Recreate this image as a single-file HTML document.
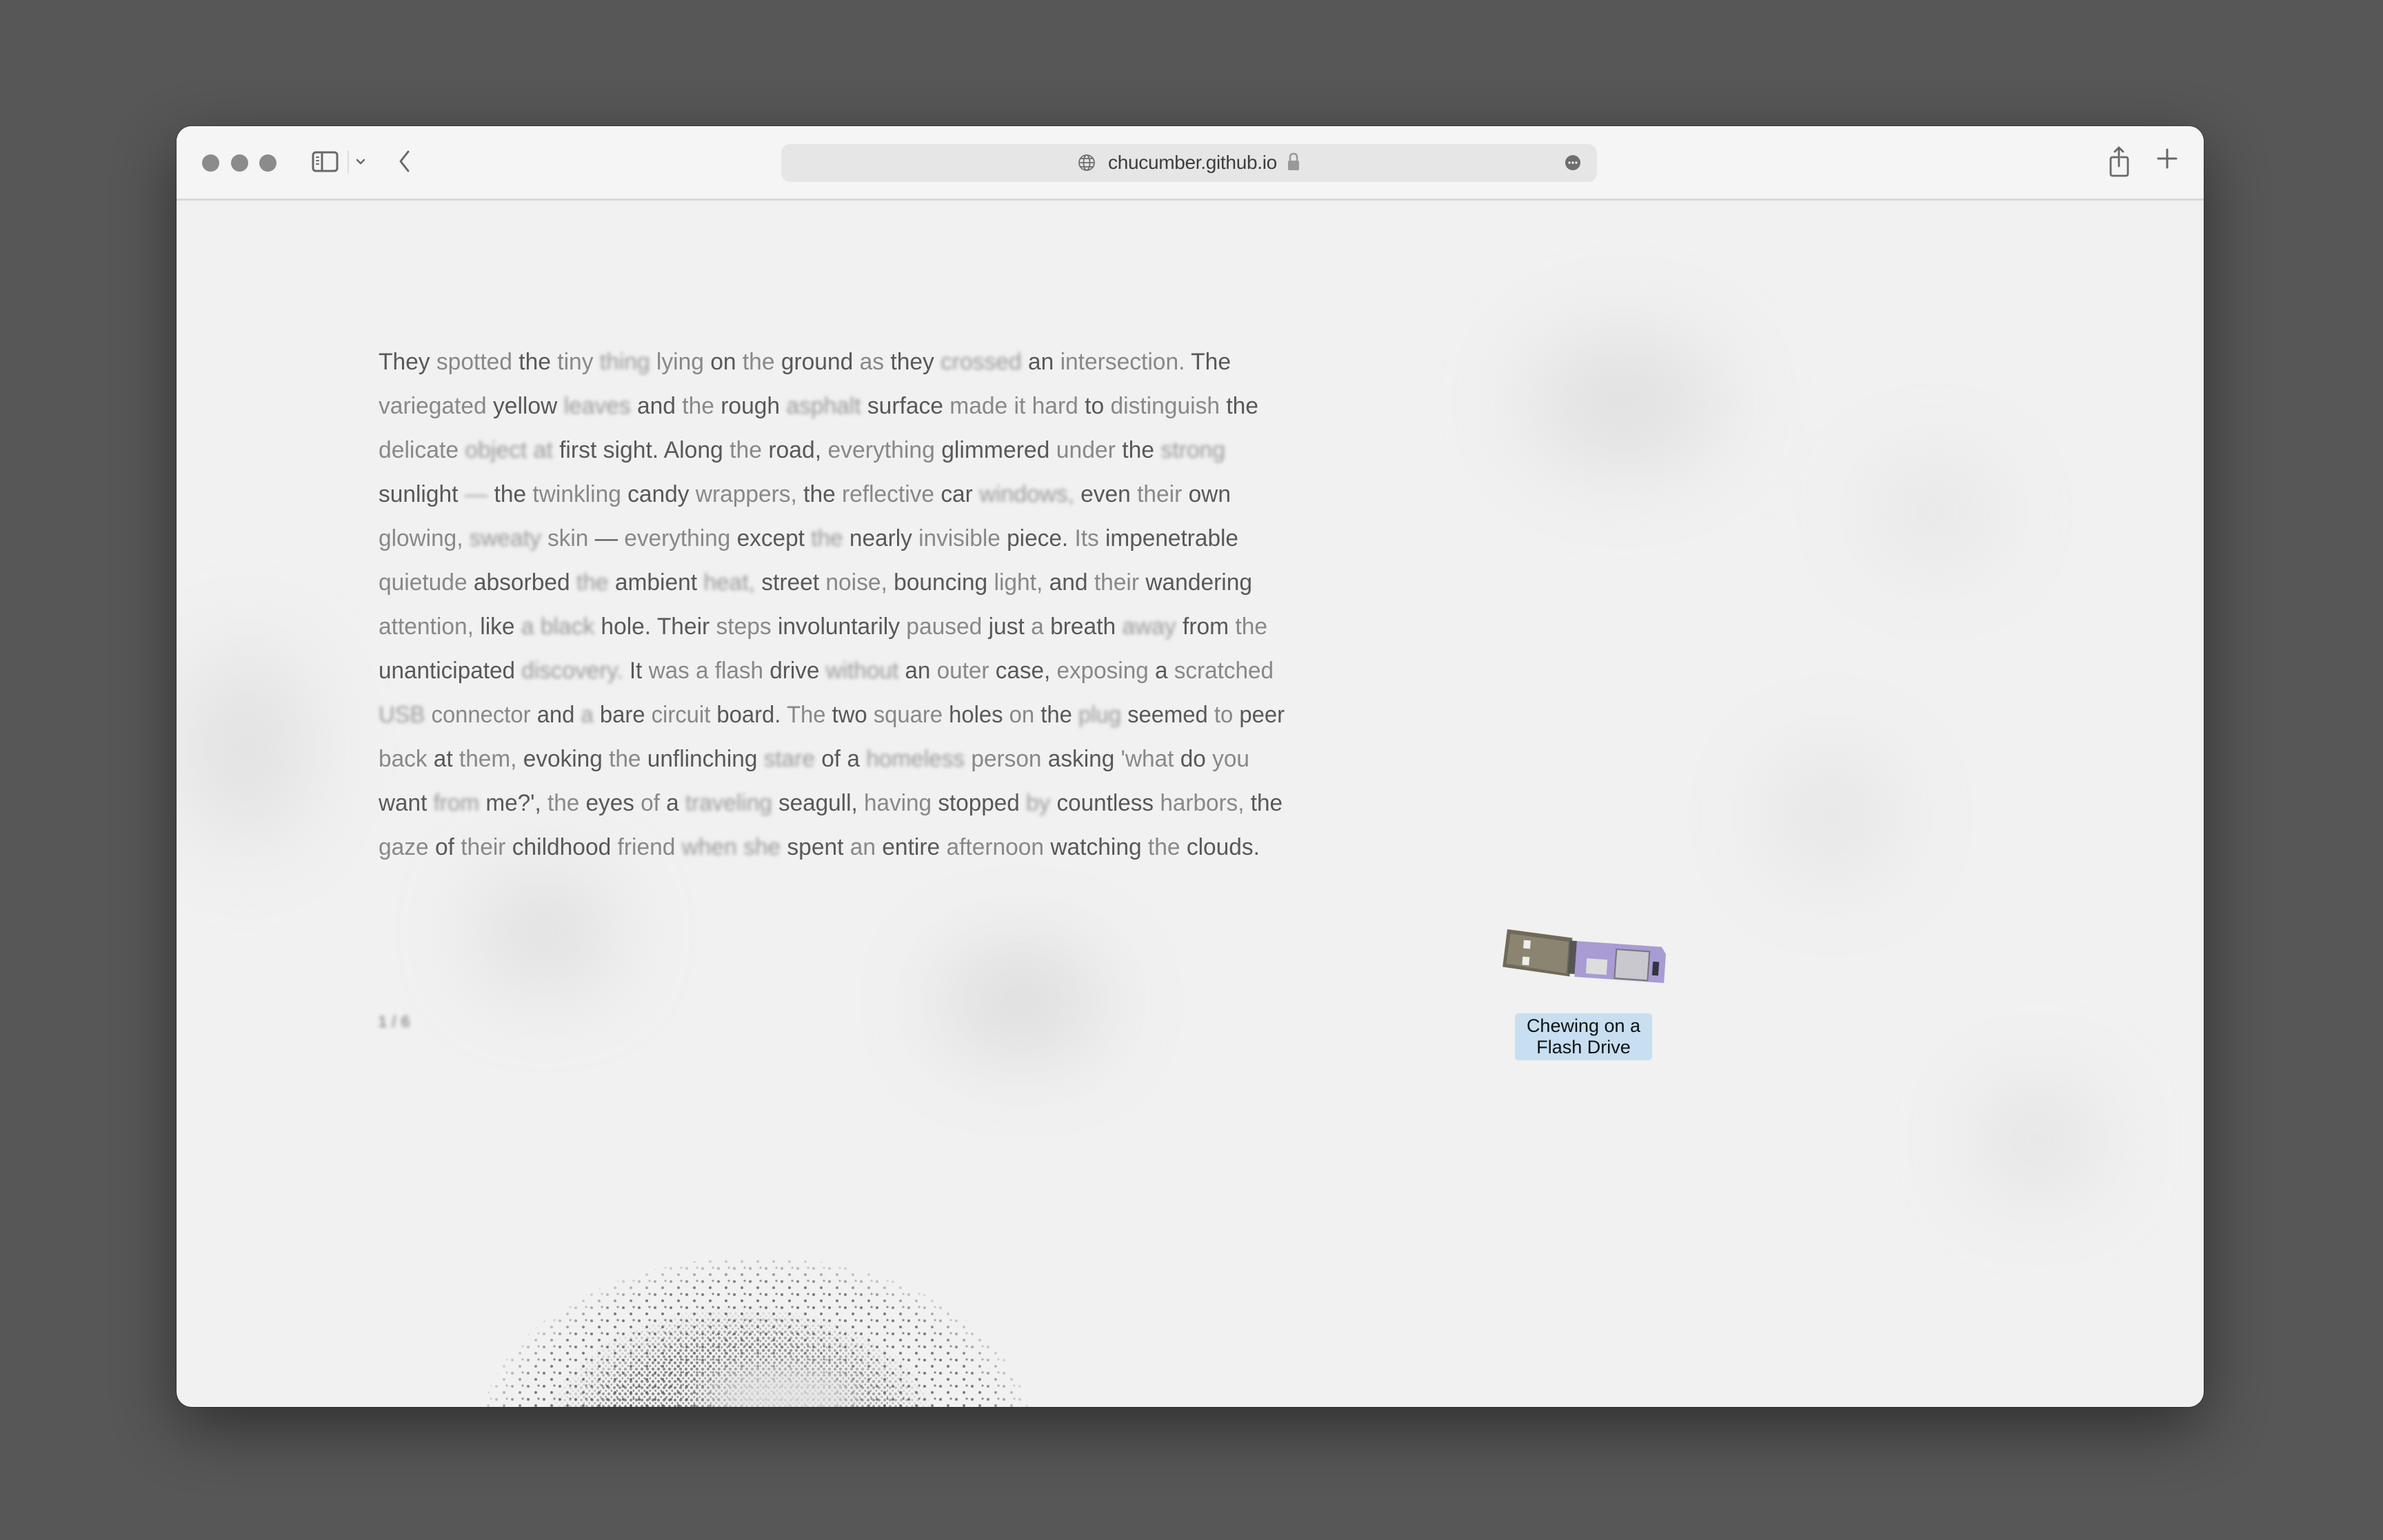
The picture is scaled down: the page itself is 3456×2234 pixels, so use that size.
<!DOCTYPE html>
<html><head><meta charset="utf-8">
<style>
html,body{margin:0;padding:0;width:3456px;height:2234px;background:#575757;overflow:hidden;}
#win{position:absolute;left:256px;top:183px;width:2940px;height:1858px;border-radius:22px;overflow:hidden;background:#f1f1f1;box-shadow:0 30px 90px rgba(0,0,0,.45),0 0 0 1px rgba(0,0,0,.3);}
#tb{position:absolute;left:0;top:0;width:2940px;height:105px;background:#f5f5f5;border-bottom:3px solid #d9d9d9;}
.tl{position:absolute;top:41px;width:25px;height:25px;border-radius:50%;background:#8b8b8b;}
#addr{position:absolute;left:877px;top:26px;width:1183px;height:55px;border-radius:13px;background:#e6e6e6;}
#url{position:absolute;left:474px;top:11px;font:28px "Liberation Sans",sans-serif;color:#3d3d3d;letter-spacing:-0.3px;}
svg text{font-family:"Liberation Sans Narrow","Liberation Sans",sans-serif;font-size:34px;}
.d{fill:#585858}.l{fill:#888}.b{fill:#999;filter:url(#bl)}
#lab{position:absolute;left:1941px;top:1287px;width:199px;height:68px;background:#c7dff1;border-radius:5px;font:27px/31px "Liberation Sans",sans-serif;color:#111;text-align:center;padding-top:3px;box-sizing:border-box;}
</style></head><body>
<div id="win">
<svg width="2940" height="1858" style="position:absolute;left:0;top:0">
<defs>
<filter id="bl"><feGaussianBlur stdDeviation="2.6"/></filter>
<filter id="bb" x="-50%" y="-50%" width="200%" height="200%"><feGaussianBlur stdDeviation="70"/></filter>
<filter id="wb" x="-50%" y="-50%" width="200%" height="200%"><feGaussianBlur stdDeviation="25"/></filter>
<pattern id="dots" width="8" height="9" patternUnits="userSpaceOnUse"><circle cx="3" cy="3" r="2.1" fill="#555"/><circle cx="7" cy="7.5" r="1.6" fill="#666"/></pattern>
<pattern id="sdots" width="23" height="19" patternUnits="userSpaceOnUse"><circle cx="4" cy="4" r="2" fill="#555"/><circle cx="15" cy="13" r="2" fill="#555"/><circle cx="19" cy="3" r="1.6" fill="#666"/></pattern>
<radialGradient id="gm" cx="0.5" cy="0.5" r="0.5"><stop offset="0" stop-color="#fff"/><stop offset="0.7" stop-color="#fff" stop-opacity="0.8"/><stop offset="1" stop-color="#fff" stop-opacity="0"/></radialGradient>
<radialGradient id="gs" cx="0.5" cy="0.5" r="0.5"><stop offset="0" stop-color="#fff"/><stop offset="0.85" stop-color="#fff" stop-opacity="0.9"/><stop offset="1" stop-color="#fff" stop-opacity="0.2"/></radialGradient>
<mask id="smask"><ellipse cx="840" cy="1900" rx="400" ry="260" fill="url(#gs)"/></mask>
<mask id="gmask"><ellipse cx="820" cy="1900" rx="290" ry="190" fill="url(#gm)"/></mask>
</defs>
<g filter="url(#bb)" opacity="0.35">
<ellipse cx="535" cy="1170" rx="90" ry="70" fill="#aaa"/>
<ellipse cx="1225" cy="1270" rx="110" ry="60" fill="#999"/>
<ellipse cx="100" cy="900" rx="80" ry="140" fill="#bbb"/>
<ellipse cx="2100" cy="400" rx="140" ry="90" fill="#bbb"/>
<ellipse cx="2700" cy="1470" rx="80" ry="70" fill="#bbb"/>
<ellipse cx="2400" cy="1000" rx="90" ry="90" fill="#ccc"/>
<ellipse cx="2550" cy="560" rx="90" ry="70" fill="#ccc"/>
</g>
<g transform="translate(-256,-183)">
<text x="549" y="536" textLength="1236" lengthAdjust="spacingAndGlyphs"><tspan class="d">They </tspan><tspan class="l">spotted </tspan><tspan class="d">the </tspan><tspan class="l">tiny </tspan><tspan class="b">thing </tspan><tspan class="l">lying </tspan><tspan class="d">on </tspan><tspan class="l">the </tspan><tspan class="d">ground </tspan><tspan class="l">as </tspan><tspan class="d">they </tspan><tspan class="b">crossed </tspan><tspan class="d">an </tspan><tspan class="l">intersection. </tspan><tspan class="d">The</tspan></text>
<text x="549" y="600" textLength="1276" lengthAdjust="spacingAndGlyphs"><tspan class="l">variegated </tspan><tspan class="d">yellow </tspan><tspan class="b">leaves </tspan><tspan class="d">and </tspan><tspan class="l">the </tspan><tspan class="d">rough </tspan><tspan class="b">asphalt </tspan><tspan class="d">surface </tspan><tspan class="l">made it hard </tspan><tspan class="d">to </tspan><tspan class="l">distinguish </tspan><tspan class="d">the</tspan></text>
<text x="549" y="664" textLength="1228" lengthAdjust="spacingAndGlyphs"><tspan class="l">delicate </tspan><tspan class="b">object at </tspan><tspan class="d">first sight. Along </tspan><tspan class="l">the </tspan><tspan class="d">road, </tspan><tspan class="l">everything </tspan><tspan class="d">glimmered </tspan><tspan class="l">under </tspan><tspan class="d">the </tspan><tspan class="b">strong</tspan></text>
<text x="549" y="728" textLength="1236" lengthAdjust="spacingAndGlyphs"><tspan class="d">sunlight </tspan><tspan class="b">— </tspan><tspan class="d">the </tspan><tspan class="l">twinkling </tspan><tspan class="d">candy </tspan><tspan class="l">wrappers, </tspan><tspan class="d">the </tspan><tspan class="l">reflective </tspan><tspan class="d">car </tspan><tspan class="b">windows, </tspan><tspan class="d">even </tspan><tspan class="l">their </tspan><tspan class="d">own</tspan></text>
<text x="549" y="792" textLength="1247" lengthAdjust="spacingAndGlyphs"><tspan class="l">glowing, </tspan><tspan class="b">sweaty </tspan><tspan class="l">skin </tspan><tspan class="d">— </tspan><tspan class="l">everything </tspan><tspan class="d">except </tspan><tspan class="b">the </tspan><tspan class="d">nearly </tspan><tspan class="l">invisible </tspan><tspan class="d">piece. </tspan><tspan class="l">Its </tspan><tspan class="d">impenetrable</tspan></text>
<text x="549" y="856" textLength="1267" lengthAdjust="spacingAndGlyphs"><tspan class="l">quietude </tspan><tspan class="d">absorbed </tspan><tspan class="b">the </tspan><tspan class="d">ambient </tspan><tspan class="b">heat, </tspan><tspan class="d">street </tspan><tspan class="l">noise, </tspan><tspan class="d">bouncing </tspan><tspan class="l">light, </tspan><tspan class="d">and </tspan><tspan class="l">their </tspan><tspan class="d">wandering</tspan></text>
<text x="549" y="920" textLength="1289" lengthAdjust="spacingAndGlyphs"><tspan class="l">attention, </tspan><tspan class="d">like </tspan><tspan class="b">a black </tspan><tspan class="d">hole. Their </tspan><tspan class="l">steps </tspan><tspan class="d">involuntarily </tspan><tspan class="l">paused </tspan><tspan class="d">just </tspan><tspan class="l">a </tspan><tspan class="d">breath </tspan><tspan class="b">away </tspan><tspan class="d">from </tspan><tspan class="l">the</tspan></text>
<text x="549" y="984" textLength="1298" lengthAdjust="spacingAndGlyphs"><tspan class="d">unanticipated </tspan><tspan class="b">discovery. </tspan><tspan class="d">It </tspan><tspan class="l">was a flash </tspan><tspan class="d">drive </tspan><tspan class="b">without </tspan><tspan class="d">an </tspan><tspan class="l">outer </tspan><tspan class="d">case, </tspan><tspan class="l">exposing </tspan><tspan class="d">a </tspan><tspan class="l">scratched</tspan></text>
<text x="549" y="1048" textLength="1314" lengthAdjust="spacingAndGlyphs"><tspan class="b">USB </tspan><tspan class="l">connector </tspan><tspan class="d">and </tspan><tspan class="b">a </tspan><tspan class="d">bare </tspan><tspan class="l">circuit </tspan><tspan class="d">board. </tspan><tspan class="l">The </tspan><tspan class="d">two </tspan><tspan class="l">square </tspan><tspan class="d">holes </tspan><tspan class="l">on </tspan><tspan class="d">the </tspan><tspan class="b">plug </tspan><tspan class="d">seemed </tspan><tspan class="l">to </tspan><tspan class="d">peer</tspan></text>
<text x="549" y="1112" textLength="1263" lengthAdjust="spacingAndGlyphs"><tspan class="l">back </tspan><tspan class="d">at </tspan><tspan class="l">them, </tspan><tspan class="d">evoking </tspan><tspan class="l">the </tspan><tspan class="d">unflinching </tspan><tspan class="b">stare </tspan><tspan class="d">of a </tspan><tspan class="b">homeless </tspan><tspan class="l">person </tspan><tspan class="d">asking </tspan><tspan class="l">'what </tspan><tspan class="d">do </tspan><tspan class="l">you</tspan></text>
<text x="549" y="1176" textLength="1311" lengthAdjust="spacingAndGlyphs"><tspan class="d">want </tspan><tspan class="b">from </tspan><tspan class="d">me?', </tspan><tspan class="l">the </tspan><tspan class="d">eyes </tspan><tspan class="l">of </tspan><tspan class="d">a </tspan><tspan class="b">traveling </tspan><tspan class="d">seagull, </tspan><tspan class="l">having </tspan><tspan class="d">stopped </tspan><tspan class="b">by </tspan><tspan class="d">countless </tspan><tspan class="l">harbors, </tspan><tspan class="d">the</tspan></text>
<text x="549" y="1240" textLength="1278" lengthAdjust="spacingAndGlyphs"><tspan class="l">gaze </tspan><tspan class="d">of </tspan><tspan class="l">their </tspan><tspan class="d">childhood </tspan><tspan class="l">friend </tspan><tspan class="b">when she </tspan><tspan class="d">spent </tspan><tspan class="l">an </tspan><tspan class="d">entire </tspan><tspan class="l">afternoon </tspan><tspan class="d">watching </tspan><tspan class="l">the </tspan><tspan class="d">clouds.</tspan></text>
<text x="548" y="1490" style="font-size:24px;font-weight:bold" fill="#9a9a9a" filter="url(#bl)">1 / 6</text>
</g>
<!-- galaxy -->
<rect x="420" y="1630" width="840" height="240" fill="url(#sdots)" mask="url(#smask)" opacity="0.85"/>
<rect x="520" y="1710" width="620" height="160" fill="url(#dots)" mask="url(#gmask)" opacity="0.8"/>
<ellipse cx="880" cy="1845" rx="120" ry="45" fill="#e4e4e4" filter="url(#wb)" opacity="0.9"/>
<!-- flash drive -->
<g transform="translate(1930,1165) rotate(4)">
<path d="M0,0 L95,6 L95,62 L-3,55 Z" fill="#6f6a58"/>
<path d="M5,6 L90,12 L90,58 L2,50 Z" fill="#8a8470"/>
<rect x="25" y="14" width="10" height="12" fill="#eee"/>
<rect x="25" y="38" width="10" height="12" fill="#eee"/>
<rect x="92" y="10" width="10" height="48" fill="#555"/>
<path d="M102,10 L225,10 L232,20 L232,62 L102,62 Z" fill="#a99bd4"/>
<rect x="160" y="18" width="48" height="42" fill="#c8c8ce" stroke="#777" stroke-width="2"/>
<rect x="118" y="34" width="30" height="22" fill="#ddd"/>
<rect x="214" y="32" width="9" height="20" fill="#334"/>
</g>
</svg>
<div id="lab">Chewing on a<br>Flash Drive</div>
<div id="tb">
<div class="tl" style="left:37px"></div><div class="tl" style="left:79px"></div><div class="tl" style="left:120px"></div>
<svg width="2940" height="105" style="position:absolute;left:0;top:0" fill="none" stroke="#686868" stroke-width="3" stroke-linecap="round" stroke-linejoin="round">
<rect x="198" y="38" width="35" height="27" rx="4"/>
<line x1="211" y1="38" x2="211" y2="65"/>
<line x1="203" y1="45" x2="206" y2="45" stroke-width="2"/><line x1="203" y1="50" x2="206" y2="50" stroke-width="2"/><line x1="203" y1="55" x2="206" y2="55" stroke-width="2"/>
<line x1="249" y1="36" x2="249" y2="68" stroke="#ddd" stroke-width="2"/>
<polyline points="262,49 267,54 272,49" stroke-width="2.5"/>
<polyline points="336,37 325,51 336,65"/>
<path d="M2815,45 L2808,45 Q2805,45 2805,48 L2805,69 Q2805,72 2808,72 L2827,72 Q2830,72 2830,69 L2830,48 Q2830,45 2827,45 L2820,45" stroke-width="2.8"/>
<line x1="2817" y1="31" x2="2817" y2="58" stroke-width="2.8"/>
<polyline points="2811,37 2817,31 2823,37" stroke-width="2.8"/>
<line x1="2887" y1="34" x2="2887" y2="60" stroke-width="3"/>
<line x1="2874" y1="47" x2="2900" y2="47" stroke-width="3"/>
</svg>
<div id="addr">
<svg width="1183" height="55" style="position:absolute;left:0;top:0">
<g fill="none" stroke="#6e6e6e" stroke-width="1.8"><circle cx="443" cy="27" r="11"/><ellipse cx="443" cy="27" rx="4.5" ry="11"/><line x1="432" y1="27" x2="454" y2="27"/><line x1="434" y1="21" x2="452" y2="21"/><line x1="434" y1="33" x2="452" y2="33"/></g>
<path d="M738,24 L738,19 Q738,14 743,14 Q748,14 748,19 L748,24" fill="none" stroke="#999" stroke-width="2.5"/>
<rect x="735" y="24" width="16" height="14" rx="2" fill="#999"/>
<circle cx="1148" cy="27" r="11" fill="#6e6e6e"/>
<circle cx="1143" cy="27" r="1.6" fill="#fff"/><circle cx="1148" cy="27" r="1.6" fill="#fff"/><circle cx="1153" cy="27" r="1.6" fill="#fff"/>
</svg>
<div id="url">chucumber.github.io</div>
</div>
</div>
</div>
</body></html>
